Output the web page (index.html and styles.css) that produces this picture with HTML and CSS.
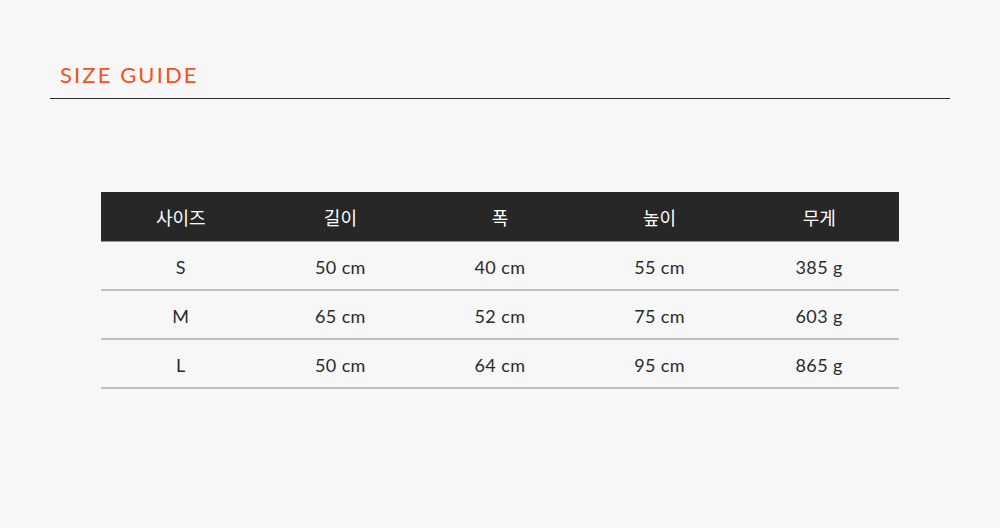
FILE: index.html
```html
<!DOCTYPE html>
<html lang="ko">
<head>
<meta charset="utf-8">
<title>Size Guide</title>
<link rel="stylesheet" href="styles.css">
</head>
<body>
<div class="page">
  <h2 class="title">SIZE GUIDE</h2>
  <div class="table-wrap">
    <table class="size-table">
      <thead>
        <tr><th>사이즈</th><th>길이</th><th>폭</th><th>높이</th><th>무게</th></tr>
      </thead>
      <tbody>
        <tr><td>S</td><td>50 cm</td><td>40 cm</td><td>55 cm</td><td>385 g</td></tr>
        <tr><td>M</td><td>65 cm</td><td>52 cm</td><td>75 cm</td><td>603 g</td></tr>
        <tr><td>L</td><td>50 cm</td><td>64 cm</td><td>95 cm</td><td>865 g</td></tr>
      </tbody>
    </table>
  </div>
</div>
</body>
</html>
```

FILE: styles.css
```css
html, body {
  margin: 0;
  padding: 0;
  background: #f7f7f7;
}
body {
  width: 1000px;
  height: 528px;
  overflow: hidden;
  font-family: "Lato", "Noto Sans CJK KR", sans-serif;
  color: #222;
}
.page {
  padding: 60px 50px 0;
}
.title {
  margin: 0;
  padding: 0 0 8px 10px;
  font-size: 22px;
  font-weight: 400;
  letter-spacing: 2.1px;
  line-height: 30px;
  color: #f4511e;
  border-bottom: 1px solid #2a2a2a;
}
.table-wrap {
  padding: 93px 51px 0;
}
.size-table {
  width: 100%;
  border-collapse: collapse;
  table-layout: fixed;
}
.size-table th {
  background: #272727;
  color: #fff;
  font-family: "Noto Sans CJK KR", sans-serif;
  font-weight: 400;
  font-size: 18px;
  height: 49px;
  padding: 0;
  border-bottom: 1px solid #9a9a9a;
}
.size-table td {
  text-align: center;
  font-size: 18px;
  letter-spacing: 0.4px;
  color: #2a2a2a;
  height: 45px;
  padding: 2px 0 0;
  border-bottom: 2px solid #bfbfbf;
}
```
